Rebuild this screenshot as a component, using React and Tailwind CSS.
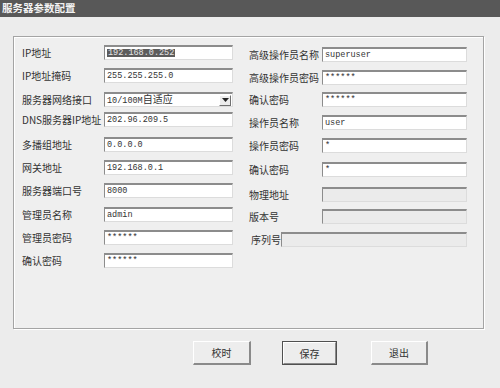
import React from "react";

const cjk = "font-['Noto_Sans_CJK_SC','Noto_Sans',sans-serif]";
const mono = "font-['Liberation_Mono','DejaVu_Sans_Mono',monospace]";

function Field({ children, disabled, className = "" }) {
  return (
    <div
      className={`h-[15px] flex items-center pl-[2px] border-t-2 border-l border-r border-b border-t-[#8c8c8c] border-l-[#8c8c8c] border-r-[#dcdcdc] border-b-[#dcdcdc] ${
        disabled ? "bg-[#ebebeb]" : "bg-white"
      } ${mono} text-[8.5px] text-[#333] leading-none ${className}`}
    >
      {children}
    </div>
  );
}

function Row({ label, labelW, inputW, mt, children, disabled }) {
  return (
    <div className={`flex items-center ${mt}`}>
      <div className={`${labelW} ${cjk} text-[10px] text-[#333] leading-none whitespace-nowrap`}>
        {label}
      </div>
      <Field disabled={disabled} className={inputW}>
        {children}
      </Field>
    </div>
  );
}

const leftRows = [
  { label: "IP地址", mt: "mt-0", value: <span className="bg-[#5c5c5c] text-[#e4e4e4] px-[1px]">192.168.0.252</span> },
  { label: "IP地址掩码", mt: "mt-[8px]", value: "255.255.255.0" },
  { label: "服务器网络接口", mt: "mt-[9px]", select: true, value: "10/100M自适应" },
  { label: "DNS服务器IP地址", mt: "mt-[5px]", value: "202.96.209.5" },
  { label: "多播组地址", mt: "mt-[10px]", value: "0.0.0.0" },
  { label: "网关地址", mt: "mt-[8px]", value: "192.168.0.1" },
  { label: "服务器端口号", mt: "mt-[8px]", value: "8000" },
  { label: "管理员名称", mt: "mt-[9px]", value: "admin" },
  { label: "管理员密码", mt: "mt-[8px]", value: "******" },
  { label: "确认密码", mt: "mt-[8px]", value: "******" },
];

const rightRows = [
  { label: "高级操作员名称", mt: "mt-[2px]", value: "superuser" },
  { label: "高级操作员密码", mt: "mt-[8px]", value: "******" },
  { label: "确认密码", mt: "mt-[7px]", value: "******" },
  { label: "操作员名称", mt: "mt-[8px]", value: "user" },
  { label: "操作员密码", mt: "mt-[8px]", value: "*" },
  { label: "确认密码", mt: "mt-[9px]", value: "*" },
  { label: "物理地址", mt: "mt-[10px]", value: "", disabled: true },
  { label: "版本号", mt: "mt-[7px]", value: "", disabled: true },
];

function Button({ children, isDefault, w }) {
  if (isDefault) {
    return (
      <div className={`${w} h-[24px] border border-[#505050] bg-[#ededed]`}>
        <div className={`h-full flex items-center justify-center border-t border-l border-t-white border-l-white border-r border-b border-r-[#8a8a8a] border-b-[#8a8a8a] ${cjk} text-[10px] text-[#333]`}>
          {children}
        </div>
      </div>
    );
  }
  return (
    <div
      className={`${w} h-[24px] flex items-center justify-center bg-[#ededed] border-t border-l border-t-white border-l-white border-r-2 border-b-2 border-r-[#8a8a8a] border-b-[#8a8a8a] ${cjk} text-[10px] text-[#333]`}
    >
      {children}
    </div>
  );
}

export default function App() {
  return (
    <div className="w-[500px] h-[388px] bg-[#ececec] overflow-hidden">
      <div className={`h-[17px] bg-[#585858] flex items-center pl-[2px] ${cjk} text-[10.5px] font-bold text-[#f2f2f2] leading-none`}>
        服务器参数配置
      </div>
      <div className="ml-[13px] mt-[19px] w-[471px] h-[293px] border border-[#a4a4a4] shadow-[inset_1px_1px_0_#ffffff,1px_1px_0_#ffffff] bg-[#efefef] flex pl-[8px] pt-[8px]">
        <div className="flex flex-col">
          {leftRows.map((r, i) => (
            <div key={i} className={`flex items-center ${r.mt}`}>
              <div className={`w-[82px] ${cjk} text-[10px] text-[#333] leading-none whitespace-nowrap`}>{r.label}</div>
              {r.select ? (
                <Field className="w-[129px] justify-between pr-[1px]">
                  <span className={`${cjk} text-[10px]`}>
                    <span className={mono + " text-[8.5px]"}>10/100M</span>自适应
                  </span>
                  <span className="w-[12px] h-[11px] bg-[#ececec] border-t border-l border-t-white border-l-white border-r border-b border-r-[#707070] border-b-[#707070] flex items-center justify-center">
                    <svg width="7" height="4" viewBox="0 0 7 4">
                      <path d="M0 0 H7 L3.5 4 Z" fill="#222" />
                    </svg>
                  </span>
                </Field>
              ) : (
                <Field className="w-[129px]">{r.value}</Field>
              )}
            </div>
          ))}
        </div>
        <div className="flex flex-col ml-[16px]">
          {rightRows.map((r, i) => (
            <Row key={i} label={r.label} labelW="w-[73px]" inputW="w-[145px]" mt={r.mt} disabled={r.disabled}>
              {r.value}
            </Row>
          ))}
          <Row label="序列号" labelW="w-[32px] pl-[2px]" inputW="w-[186px]" mt="mt-[8px]" disabled>
            {""}
          </Row>
        </div>
      </div>
      <div className="flex mt-[12px] ml-[193px]">
        <Button w="w-[58px]">校时</Button>
        <div className="ml-[31px]">
          <Button w="w-[55px]" isDefault>保存</Button>
        </div>
        <div className="ml-[34px]">
          <Button w="w-[57px]">退出</Button>
        </div>
      </div>
    </div>
  );
}
